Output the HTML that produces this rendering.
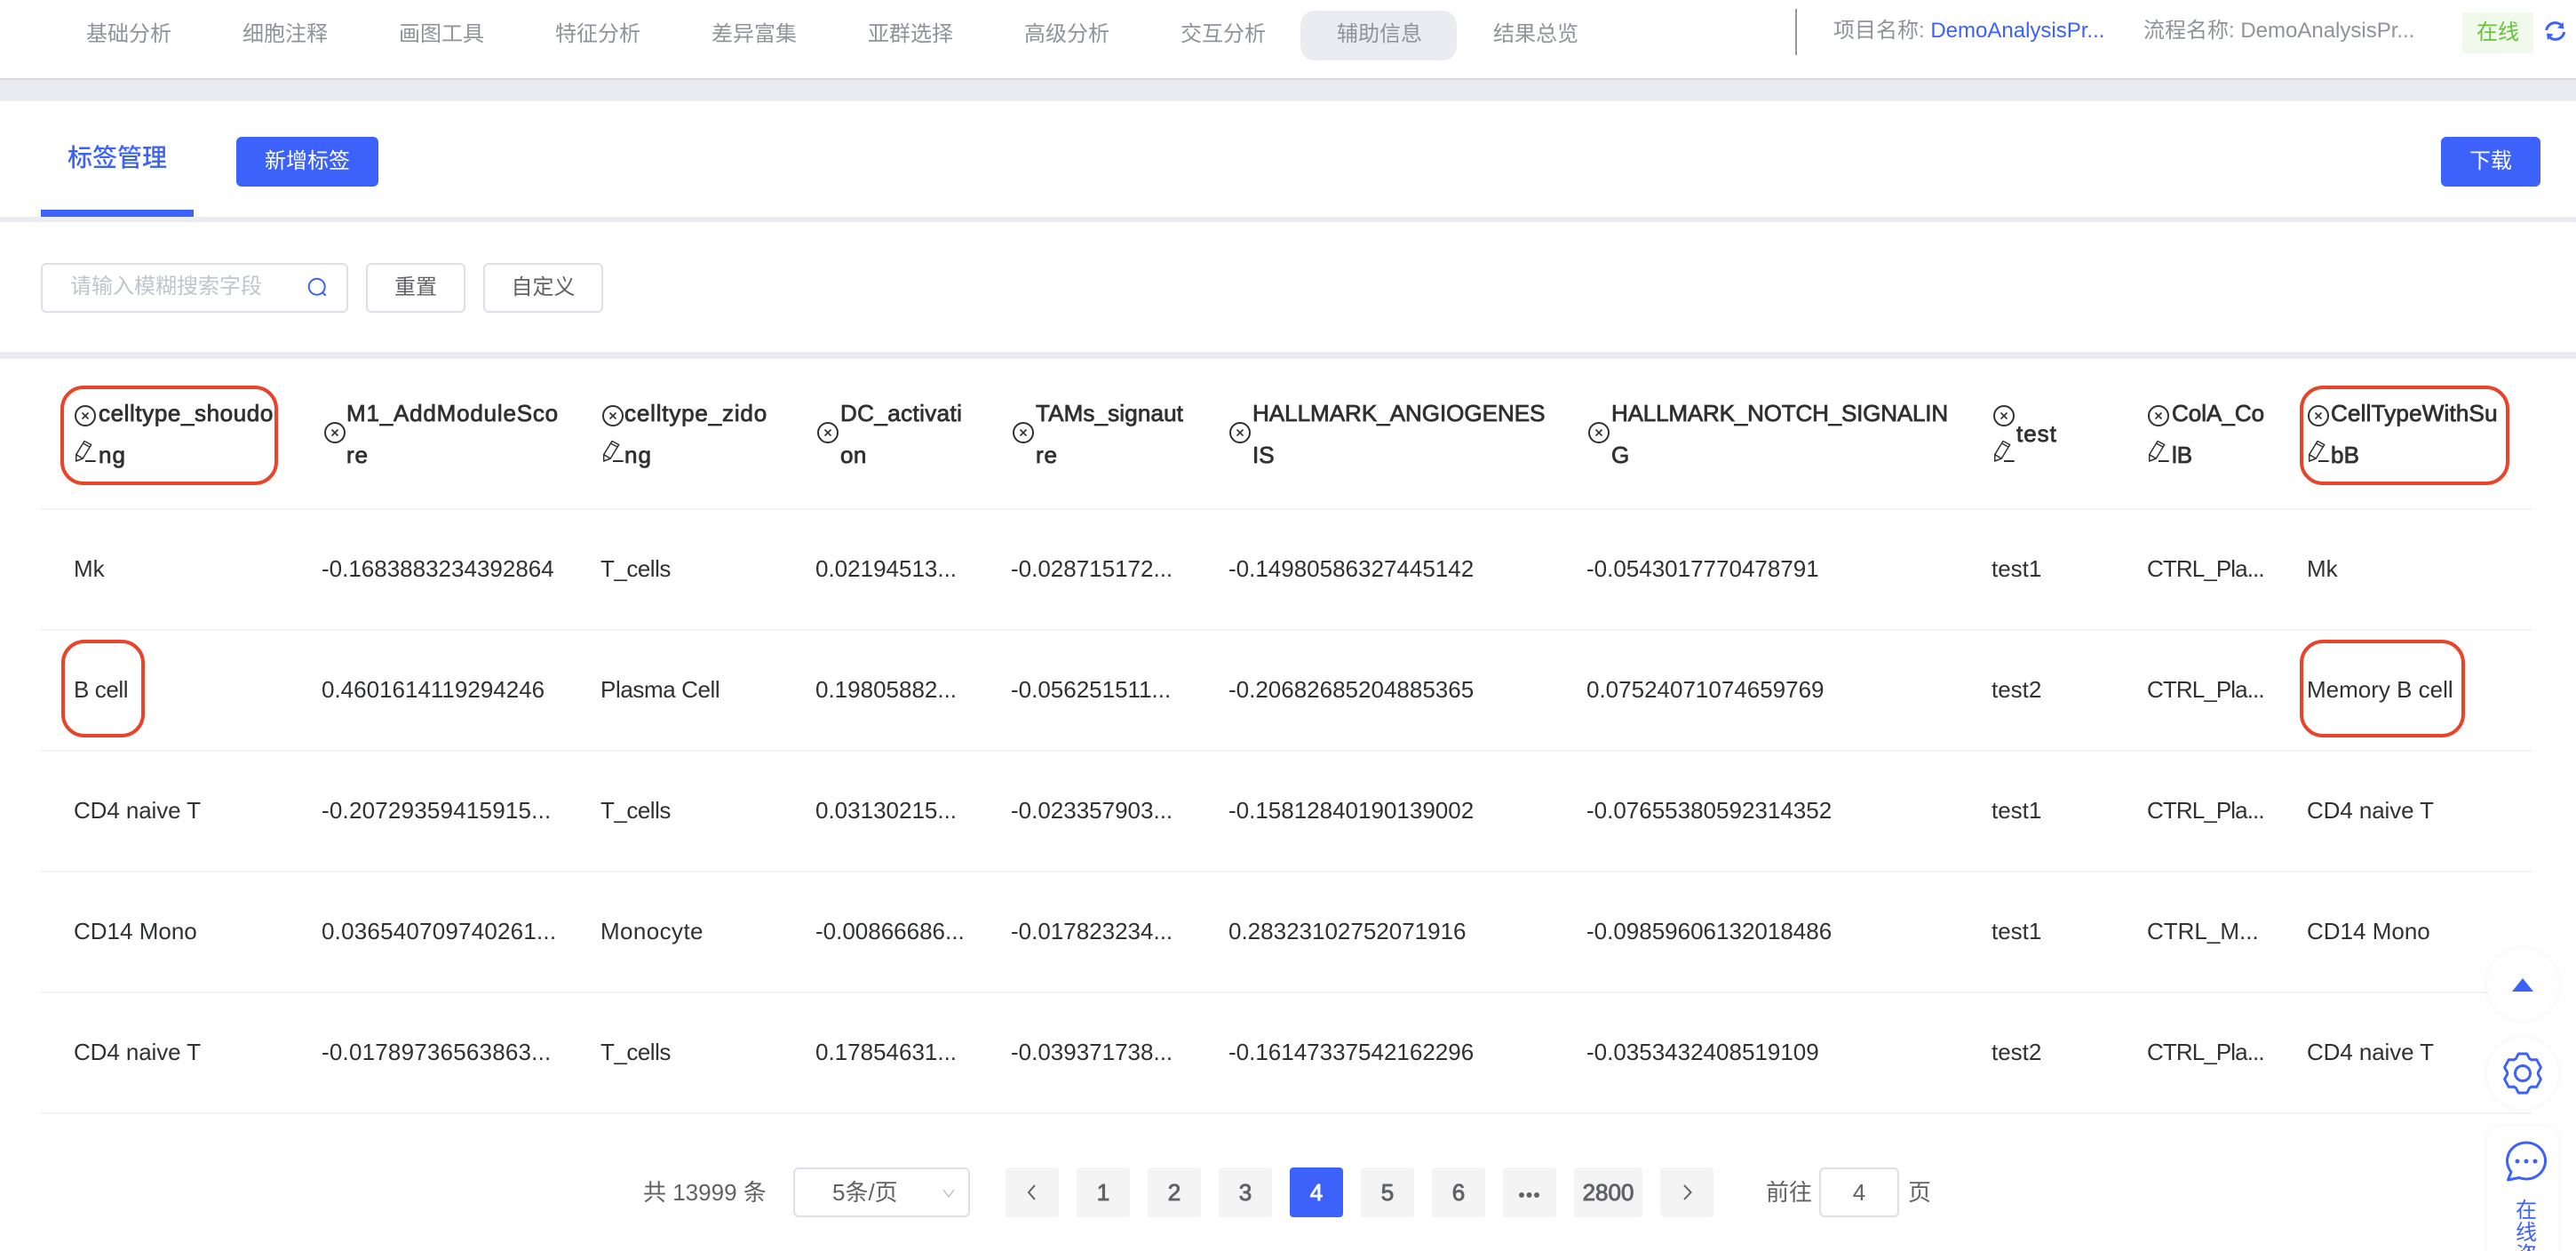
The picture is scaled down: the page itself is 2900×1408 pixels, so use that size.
<!DOCTYPE html>
<html lang="zh"><head><meta charset="utf-8"><title>标签管理</title>
<style>
html,body{margin:0;padding:0;width:2900px;height:1408px;overflow:hidden;background:#fff}
body{position:relative;font-family:"Liberation Sans","Noto Sans CJK SC",sans-serif;color:#303133}
.t{position:absolute;white-space:nowrap;line-height:40px;font-size:26px}
.n{font-size:24px;color:#909399;top:19px}
.b{position:absolute;box-sizing:border-box}
.c{text-align:center}
.h{font-weight:400;-webkit-text-stroke:.8px #303133;color:#303133}
.tc{letter-spacing:-.5px}
.ct{letter-spacing:-.9px}
.p{position:absolute;top:1314px;height:56px;background:#f4f4f5;border-radius:4px;text-align:center;line-height:56px;font-size:26px;font-weight:400;-webkit-text-stroke:.9px #606266;color:#606266}
.l{position:absolute;left:46px;width:2804px;height:2px;background:#f1f1f6}
.r{position:absolute;border:4px solid #e9432a;box-sizing:border-box;border-radius:26px}
svg{position:absolute;overflow:visible}
.btn{position:absolute;box-sizing:border-box;top:154px;height:56px;background:#3c62fb;border-radius:6px;color:#fff;font-size:24px;line-height:56px;text-align:center}
.ob{position:absolute;box-sizing:border-box;top:296px;height:56px;border:2px solid #dfe0e7;border-radius:6px;color:#606266;font-size:24px;line-height:52px;text-align:center}
.fl{position:absolute;left:2800px;width:80px;background:#fff;box-shadow:0 0 10px rgba(0,0,0,.05)}
</style></head><body>
<svg width="0" height="0" style="position:absolute"><defs>
<symbol id="x" viewBox="0 0 24 24" overflow="visible"><circle cx="12" cy="12" r="11" fill="none" stroke="#303133" stroke-width="2"/><path d="M8.500 8.500l7 7M15.500 8.500l-7 7" stroke="#303133" stroke-width="1.600" fill="none"/></symbol>
<symbol id="e" viewBox="0 0 24 24" overflow="visible"><path d="M11 .5l7.700 4L9.300 20l-7.600 3v-7.300zM9.500 3l7.500 4M1.700 15.700L9.300 20" fill="none" stroke="#303133" stroke-width="1.500" stroke-linejoin="round"/><path d="M12 23h11.700" stroke="#303133" stroke-width="2"/></symbol>
</defs></svg>

<div class="t n" style="left:97px">基础分析</div><div class="t n" style="left:273px">细胞注释</div><div class="t n" style="left:449px">画图工具</div><div class="t n" style="left:625px">特征分析</div><div class="t n" style="left:801px">差异富集</div><div class="t n" style="left:977px">亚群选择</div><div class="t n" style="left:1153px">高级分析</div><div class="t n" style="left:1329px">交互分析</div>
<div class="b" style="left:1464px;top:12px;width:176px;height:56px;background:#ebecf1;border-radius:16px"></div>
<div class="t n" style="left:1505px">辅助信息</div><div class="t n" style="left:1681px">结果总览</div>

<div class="b" style="left:2021px;top:10px;width:2px;height:52px;background:#999"></div>
<div class="t" style="left:2064px;top:15px;font-size:24px;color:#909399">项目名称: <span style="color:#3c62fb">DemoAnalysisPr...</span></div>
<div class="t" style="left:2413px;top:15px;font-size:24px;color:#909399">流程名称: DemoAnalysisPr...</div>
<div class="b c" style="left:2772px;top:14px;width:80px;height:46px;background:#f0f9eb;border-radius:4px;color:#67c23a;font-size:24px;line-height:46px">在线</div>
<svg style="left:2864px;top:22px" width="25" height="25" viewBox="0 0 25 25" fill="none" stroke="#3c62fb" stroke-width="3"><path d="M2.700 12A10 10 0 0 1 20 7"/><path d="M22.700 14A10 10 0 0 1 5.400 19"/><path d="M21.500 3l1 7.500L15 9.500zM4 23l-1-7.500 7.500 1z" fill="#3c62fb" stroke="none"/></svg>
<div class="b" style="left:0;top:88px;width:2900px;height:2px;background:#d9d9d9"></div>
<div class="b" style="left:0;top:90px;width:2900px;height:24px;background:#ebecf1"></div>

<div class="t" style="left:76px;top:158px;font-size:28px;font-weight:500;color:#3c62fb">标签管理</div>
<div class="btn" style="left:266px;width:160px">新增标签</div>
<div class="btn" style="left:2748px;width:112px">下载</div>
<div class="b" style="left:0;top:244px;width:2900px;height:6px;background:#ebecf1"></div>
<div class="b" style="left:46px;top:236px;width:172px;height:8px;background:#3c62fb"></div>

<div class="b" style="left:46px;top:296px;width:346px;height:56px;border:2px solid #dfe0e7;border-radius:6px"></div>
<div class="t" style="left:79px;top:303px;font-size:24px;color:#c0c4cc">请输入模糊搜索字段</div>
<svg style="left:346px;top:312px" width="22" height="22" viewBox="0 0 22 22" fill="none" stroke="#3c62fb" stroke-width="2"><circle cx="10.700" cy="10.700" r="9"/><path d="M17 17l3.700 3.700"/></svg>
<div class="ob" style="left:412px;width:112px">重置</div>
<div class="ob" style="left:544px;width:135px">自定义</div>
<div class="b" style="left:0;top:396px;width:2900px;height:8px;background:#ebecf1"></div>

<svg style="left:84px;top:456px" width="24" height="24"><use href="#x"/></svg><svg style="left:84px;top:496px" width="24" height="24"><use href="#e"/></svg>
<div class="t h" style="left:111px;top:445px;letter-spacing:.6px">celltype_shoudo</div><div class="t h" style="left:111px;top:492px;letter-spacing:1px">ng</div>

<svg style="left:365px;top:475px" width="24" height="24"><use href="#x"/></svg>
<div class="t h" style="left:390px;top:445px;letter-spacing:.8px">M1_AddModuleSco</div><div class="t h" style="left:390px;top:492px;letter-spacing:.8px">re</div>

<svg style="left:678px;top:456px" width="24" height="24"><use href="#x"/></svg><svg style="left:678px;top:496px" width="24" height="24"><use href="#e"/></svg>
<div class="t h" style="left:703px;top:445px;letter-spacing:.82px">celltype_zido</div><div class="t h" style="left:703px;top:492px;letter-spacing:1px">ng</div>

<svg style="left:920px;top:475px" width="24" height="24"><use href="#x"/></svg>
<div class="t h" style="left:946px;top:445px;letter-spacing:.4px">DC_activati</div><div class="t h" style="left:946px;top:492px;letter-spacing:.4px">on</div>

<svg style="left:1140px;top:475px" width="24" height="24"><use href="#x"/></svg>
<div class="t h" style="left:1166px;top:445px;letter-spacing:.15px">TAMs_signaut</div><div class="t h" style="left:1166px;top:492px;letter-spacing:.8px">re</div>

<svg style="left:1384px;top:475px" width="24" height="24"><use href="#x"/></svg>
<div class="t h" style="left:1410px;top:445px">HALLMARK_ANGIOGENES</div><div class="t h" style="left:1410px;top:492px">IS</div>

<svg style="left:1788px;top:475px" width="24" height="24"><use href="#x"/></svg>
<div class="t h" style="left:1814px;top:445px;letter-spacing:-.17px">HALLMARK_NOTCH_SIGNALIN</div><div class="t h" style="left:1814px;top:492px">G</div>

<svg style="left:2244px;top:456px" width="24" height="24"><use href="#x"/></svg><svg style="left:2244px;top:496px" width="24" height="24"><use href="#e"/></svg>
<div class="t h" style="left:2270px;top:468px;letter-spacing:1px">test</div>

<svg style="left:2418px;top:456px" width="24" height="24"><use href="#x"/></svg><svg style="left:2418px;top:496px" width="24" height="24"><use href="#e"/></svg>
<div class="t h" style="left:2445px;top:445px">ColA_Co</div><div class="t h" style="left:2445px;top:492px">lB</div>

<svg style="left:2598px;top:456px" width="24" height="24"><use href="#x"/></svg><svg style="left:2598px;top:496px" width="24" height="24"><use href="#e"/></svg>
<div class="t h" style="left:2624px;top:445px;letter-spacing:.2px">CellTypeWithSu</div><div class="t h" style="left:2624px;top:492px;letter-spacing:.2px">bB</div>

<div class="l" style="top:572px"></div><div class="l" style="top:708px"></div><div class="l" style="top:844px"></div><div class="l" style="top:980px"></div><div class="l" style="top:1116px"></div><div class="l" style="top:1252px"></div>

<div class="t" style="left:83px;top:620px">Mk</div><div class="t" style="left:362px;top:620px">-0.1683883234392864</div><div class="t tc" style="left:676px;top:620px">T_cells</div><div class="t" style="left:918px;top:620px">0.02194513...</div><div class="t" style="left:1138px;top:620px">-0.028715172...</div><div class="t" style="left:1383px;top:620px">-0.14980586327445142</div><div class="t" style="left:1786px;top:620px">-0.0543017770478791</div><div class="t" style="left:2242px;top:620px">test1</div><div class="t ct" style="left:2417px;top:620px">CTRL_Pla...</div><div class="t" style="left:2597px;top:620px">Mk</div>

<div class="t" style="left:83px;top:756px;letter-spacing:-.4px">B cell</div><div class="t" style="left:362px;top:756px">0.4601614119294246</div><div class="t" style="left:676px;top:756px;letter-spacing:-.4px">Plasma Cell</div><div class="t" style="left:918px;top:756px">0.19805882...</div><div class="t" style="left:1138px;top:756px">-0.056251511...</div><div class="t" style="left:1383px;top:756px">-0.20682685204885365</div><div class="t" style="left:1786px;top:756px">0.07524071074659769</div><div class="t" style="left:2242px;top:756px">test2</div><div class="t ct" style="left:2417px;top:756px">CTRL_Pla...</div><div class="t" style="left:2597px;top:756px">Memory B cell</div>

<div class="t" style="left:83px;top:892px;letter-spacing:-.1px">CD4 naive T</div><div class="t" style="left:362px;top:892px;letter-spacing:.2px">-0.20729359415915...</div><div class="t tc" style="left:676px;top:892px">T_cells</div><div class="t" style="left:918px;top:892px">0.03130215...</div><div class="t" style="left:1138px;top:892px">-0.023357903...</div><div class="t" style="left:1383px;top:892px">-0.15812840190139002</div><div class="t" style="left:1786px;top:892px">-0.07655380592314352</div><div class="t" style="left:2242px;top:892px">test1</div><div class="t ct" style="left:2417px;top:892px">CTRL_Pla...</div><div class="t" style="left:2597px;top:892px;letter-spacing:-.1px">CD4 naive T</div>

<div class="t" style="left:83px;top:1028px">CD14 Mono</div><div class="t" style="left:362px;top:1028px;letter-spacing:.2px">0.036540709740261...</div><div class="t" style="left:676px;top:1028px;letter-spacing:.4px">Monocyte</div><div class="t" style="left:918px;top:1028px">-0.00866686...</div><div class="t" style="left:1138px;top:1028px">-0.017823234...</div><div class="t" style="left:1383px;top:1028px">0.28323102752071916</div><div class="t" style="left:1786px;top:1028px">-0.09859606132018486</div><div class="t" style="left:2242px;top:1028px">test1</div><div class="t" style="left:2417px;top:1028px">CTRL_M...</div><div class="t" style="left:2597px;top:1028px">CD14 Mono</div>

<div class="t" style="left:83px;top:1164px;letter-spacing:-.1px">CD4 naive T</div><div class="t" style="left:362px;top:1164px;letter-spacing:.2px">-0.01789736563863...</div><div class="t tc" style="left:676px;top:1164px">T_cells</div><div class="t" style="left:918px;top:1164px">0.17854631...</div><div class="t" style="left:1138px;top:1164px">-0.039371738...</div><div class="t" style="left:1383px;top:1164px">-0.16147337542162296</div><div class="t" style="left:1786px;top:1164px">-0.0353432408519109</div><div class="t" style="left:2242px;top:1164px">test2</div><div class="t ct" style="left:2417px;top:1164px">CTRL_Pla...</div><div class="t" style="left:2597px;top:1164px;letter-spacing:-.1px">CD4 naive T</div>

<div class="r" style="left:68px;top:434px;width:245px;height:112px"></div>
<div class="r" style="left:2589px;top:434px;width:236px;height:112px"></div>
<div class="r" style="left:69px;top:720px;width:94px;height:110px"></div>
<div class="r" style="left:2589px;top:720px;width:186px;height:110px"></div>

<div class="t" style="left:724px;top:1322px;color:#606266">共 13999 条</div>
<div class="b" style="left:893px;top:1314px;width:199px;height:56px;border:2px solid #dfe0e7;border-radius:6px"></div>
<div class="t" style="left:937px;top:1322px;color:#606266">5条/页</div>
<svg style="left:1061px;top:1338px" width="14" height="10" fill="none" stroke="#c0c4cc" stroke-width="1.500"><path d="M1 1l6 8 6-8"/></svg>
<div class="p" style="left:1132px;width:60px"></div>
<svg style="left:1156px;top:1333px" width="10" height="18" fill="none" stroke="#606266" stroke-width="2"><path d="M9 1L2 9l7 8"/></svg>
<div class="p" style="left:1212px;width:60px">1</div><div class="p" style="left:1292px;width:60px">2</div><div class="p" style="left:1372px;width:60px">3</div>
<div class="p" style="left:1452px;width:60px;background:#3c62fb;color:#fff;-webkit-text-stroke:.9px #fff">4</div>
<div class="p" style="left:1532px;width:60px">5</div><div class="p" style="left:1612px;width:60px">6</div><div class="p" style="left:1692px;width:60px"></div>
<svg style="left:0;top:0" width="1" height="1" fill="#606266"><circle cx="1713" cy="1345" r="3"/><circle cx="1721.500" cy="1345" r="3"/><circle cx="1730" cy="1345" r="3"/></svg>
<div class="p" style="left:1772px;width:77px">2800</div><div class="p" style="left:1869px;width:60px"></div>
<svg style="left:1895px;top:1333px" width="10" height="18" fill="none" stroke="#606266" stroke-width="2"><path d="M1 1l7.500 8-7.500 8"/></svg>
<div class="t" style="left:1988px;top:1322px;color:#606266">前往</div>
<div class="b c" style="left:2048px;top:1314px;width:90px;height:56px;border:2px solid #dfe0e7;border-radius:6px;font-size:26px;line-height:52px;color:#606266">4</div>
<div class="t" style="left:2148px;top:1322px;color:#606266">页</div>

<div class="fl" style="top:1068px;height:80px;border-radius:50%"></div>
<svg style="left:2828px;top:1101px" width="24" height="15"><path d="M12 0l12 15H0z" fill="#3c62fb"/></svg>
<div class="fl" style="top:1168px;height:80px;border-radius:50%"></div>
<svg style="left:2840px;top:1208px" width="1" height="1" fill="none" stroke="#3c62fb" stroke-width="3"><polygon transform="scale(.95 1)" stroke-linejoin="round" points="-5,-22 5,-22 8,-16.500 10.290,-15.180 16.550,-15.330 21.550,-6.670 18.290,-1.320 18.290,1.320 21.550,6.670 16.550,15.330 10.290,15.180 8,16.500 5,22 -5,22 -8,16.500 -10.290,15.180 -16.550,15.330 -21.550,6.670 -18.290,1.320 -18.290,-1.320 -21.550,-6.670 -16.550,-15.330 -10.290,-15.180 -8,-16.500"/><circle r="8.500"/></svg>
<div class="fl" style="top:1268px;height:180px;border-radius:16px"></div>
<svg style="left:0;top:0" width="1" height="1" fill="none" stroke="#3c62fb" stroke-width="3"><path stroke-linejoin="round" d="M2827 1319A21.500 20.500 0 1 1 2836 1325.500L2823.500 1328z"/><g fill="#3c62fb" stroke="none"><circle cx="2834" cy="1307" r="2.500"/><circle cx="2844" cy="1307" r="2.500"/><circle cx="2854" cy="1307" r="2.500"/></g></svg>
<div class="t" style="left:2832px;top:1350px;width:24px;font-size:24px;line-height:25px;color:#3c62fb;white-space:normal">在线咨询</div>
</body></html>
